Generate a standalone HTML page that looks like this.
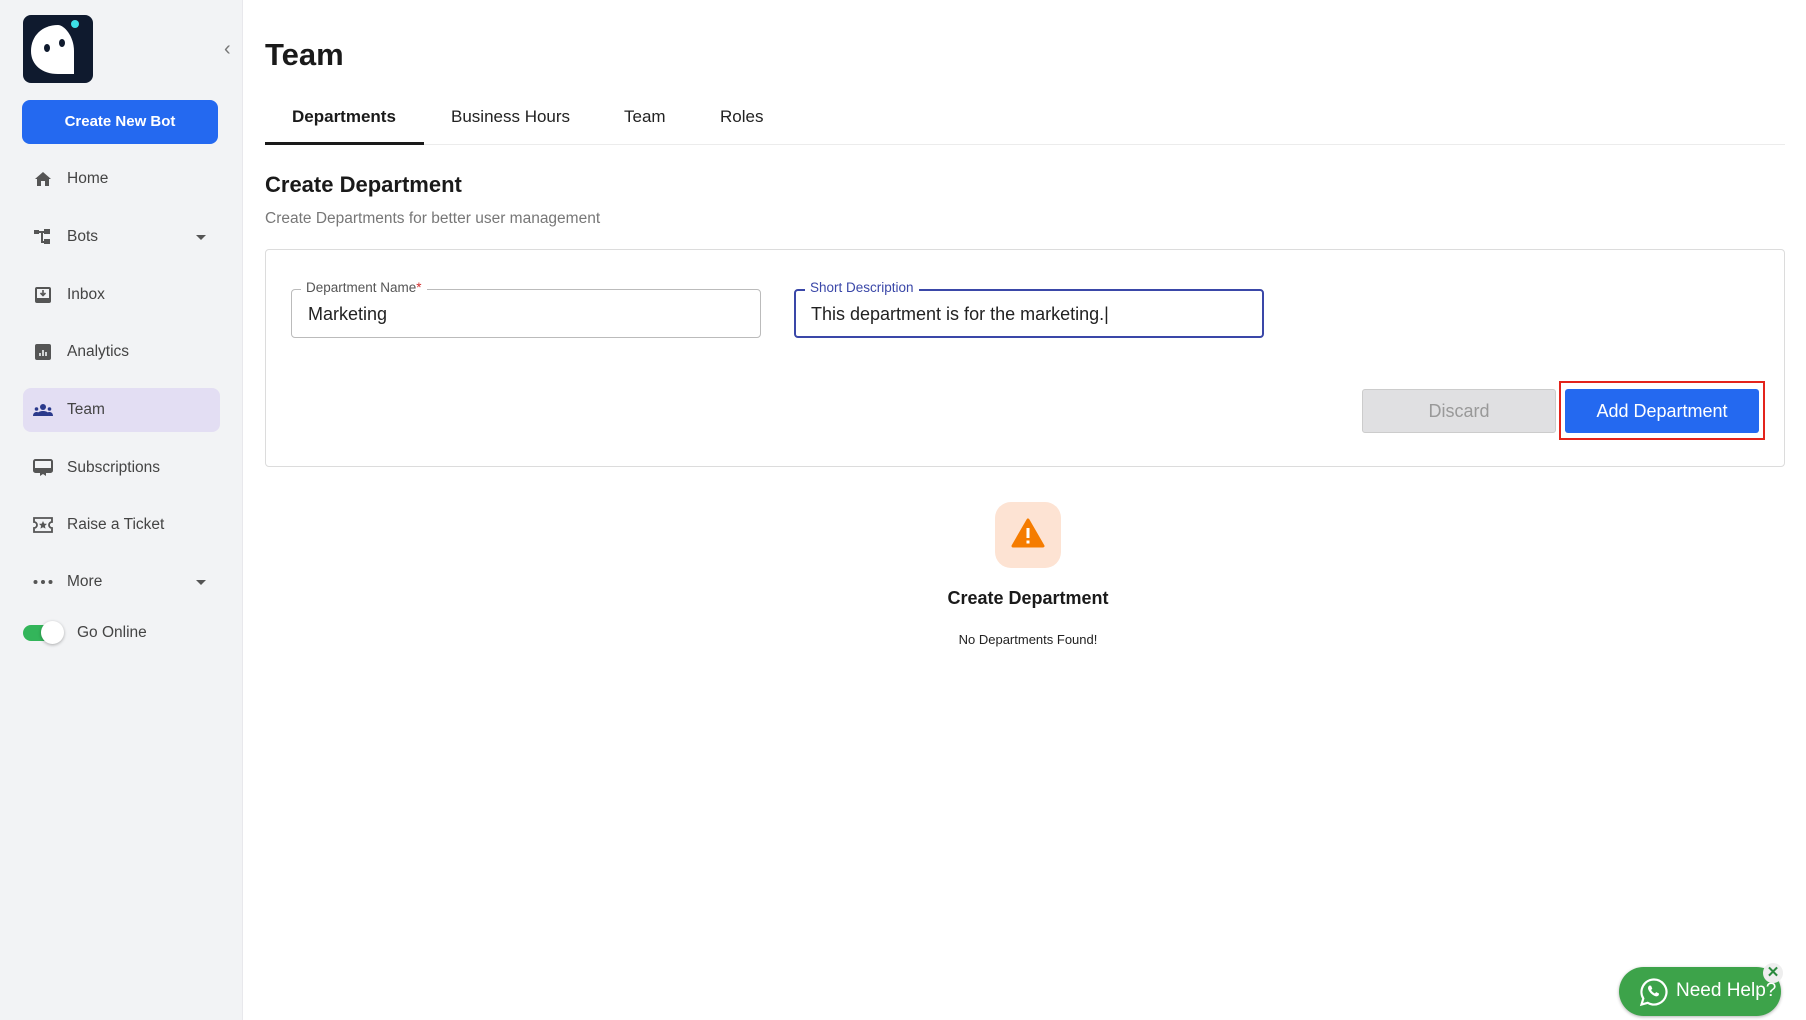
<!DOCTYPE html>
<html><head><meta charset="utf-8"><style>
*{box-sizing:border-box;margin:0;padding:0}
body{width:1806px;height:1020px;position:relative;font-family:"Liberation Sans",sans-serif;background:#fff;overflow:hidden;color:#222}
.sb{position:absolute;left:0;top:0;width:243px;height:1020px;background:#f2f3f5;border-right:1px solid #e8e8ec}
.logo{position:absolute;left:23px;top:15px;width:70px;height:68px;background:#0f1a2e;border-radius:8px}
.cnb{position:absolute;left:22px;top:100px;width:196px;height:44px;background:#2469f0;border-radius:8px;color:#fff;font-weight:bold;font-size:15px;text-align:center;line-height:44px}
.it{position:absolute;left:23px;width:197px;height:44px;font-size:15.5px;color:#444;line-height:44px}
.it .ic{position:absolute;left:10px;top:13px;width:20px;height:18px}
.it span{position:absolute;left:44px}
.it.act{background:#e3def3;border-radius:8px}
.car{position:absolute;right:14px;top:20px;border-left:5px solid transparent;border-right:5px solid transparent;border-top:5px solid #555}
.abs{position:absolute}
</style></head><body>
<div class="sb">
 <div class="logo">
  <svg width="70" height="68" viewBox="0 0 70 68"><path d="M35 10c-16 0-27 11-27 26 0 14 11 23 27 23h16V36c0-15-10-26-16-26z" fill="#fff"/><ellipse cx="24" cy="33" rx="3" ry="4" fill="#0f1a2e"/><ellipse cx="39" cy="28" rx="3" ry="4" fill="#0f1a2e"/><circle cx="52" cy="9" r="4" fill="#3de0e6"/></svg>
 </div>
 <div class="abs" style="left:224px;top:38px;color:#777;font-size:20px">‹</div>
 <div class="cnb">Create New Bot</div>
 <div class="it" style="top:157px"><svg class="ic" viewBox="0 0 20 18"><path d="M10 2L2 9h2v7h4v-5h4v5h4V9h2z" fill="#555"/></svg><span>Home</span></div>
 <div class="it" style="top:215px"><svg class="ic" viewBox="0 0 20 18"><rect x="1" y="2" width="5" height="4" fill="#555"/><rect x="11" y="1" width="6" height="5" fill="#555"/><rect x="11" y="11" width="6" height="5" fill="#555"/><path d="M6 4h5M9 4v10h2" stroke="#555" stroke-width="2" fill="none"/></svg><span>Bots</span><div class="car"></div></div>
 <div class="it" style="top:273px"><svg class="ic" viewBox="0 0 20 18"><rect x="2" y="1" width="16" height="16" rx="2" fill="#555"/><rect x="4" y="3" width="12" height="9" fill="#f2f3f5"/><path d="M10 4v5M7.5 7l2.5 2.5 2.5-2.5" stroke="#555" stroke-width="1.6" fill="none"/></svg><span>Inbox</span></div>
 <div class="it" style="top:330px"><svg class="ic" viewBox="0 0 20 18"><rect x="2" y="1" width="16" height="16" rx="2" fill="#555"/><path d="M7 13v-3M10 13V7M13 13v-4" stroke="#f2f3f5" stroke-width="1.6"/></svg><span>Analytics</span></div>
 <div class="it act" style="top:388px"><svg class="ic" viewBox="0 0 20 18"><circle cx="10" cy="6" r="3" fill="#2b3a8c"/><path d="M4 15c0-4 3-5 6-5s6 1 6 5z" fill="#2b3a8c"/><circle cx="3.5" cy="8" r="1.8" fill="#2b3a8c"/><circle cx="16.5" cy="8" r="1.8" fill="#2b3a8c"/><path d="M0 15c0-3 2-4 3.5-4s2 .5 2 .5L4 15zM20 15c0-3-2-4-3.5-4s-2 .5-2 .5L16 15z" fill="#2b3a8c"/></svg><span>Team</span></div>
 <div class="it" style="top:446px"><svg class="ic" viewBox="0 0 20 18"><rect x="1" y="1" width="18" height="12" rx="1.5" fill="none" stroke="#555" stroke-width="2"/><rect x="1" y="9" width="18" height="4" fill="#555"/><path d="M7 13v4l3-2 3 2v-4" fill="#555"/></svg><span>Subscriptions</span></div>
 <div class="it" style="top:503px"><svg class="ic" viewBox="0 0 20 18"><path d="M1 2h18v4a3 3 0 0 0 0 6v4H1v-4a3 3 0 0 0 0-6z" fill="none" stroke="#555" stroke-width="1.8"/><path d="M10 5l1.2 2.6 2.8.3-2.1 1.9.6 2.8-2.5-1.4-2.5 1.4.6-2.8-2.1-1.9 2.8-.3z" fill="#555"/></svg><span>Raise a Ticket</span></div>
 <div class="it" style="top:560px"><svg class="ic" viewBox="0 0 20 18"><circle cx="2.5" cy="9" r="2" fill="#555"/><circle cx="10" cy="9" r="2" fill="#555"/><circle cx="17.5" cy="9" r="2" fill="#555"/></svg><span>More</span><div class="car"></div></div>
 <div class="abs" style="left:23px;top:625px;width:38px;height:16px;border-radius:8px;background:#33b55a"></div>
 <div class="abs" style="left:41px;top:621px;width:23px;height:23px;border-radius:50%;background:#fff;box-shadow:0 1px 3px rgba(0,0,0,.3)"></div>
 <div class="abs" style="left:77px;top:624px;font-size:15.5px;color:#444">Go Online</div>
</div>

<div class="abs" style="left:265px;top:37px;font-size:31px;font-weight:bold;color:#1a1a1a">Team</div>
<div class="abs" style="left:292px;top:107px;font-size:17px;font-weight:bold;color:#1a1a1a">Departments</div>
<div class="abs" style="left:451px;top:107px;font-size:17px;color:#222">Business Hours</div>
<div class="abs" style="left:624px;top:107px;font-size:17px;color:#222">Team</div>
<div class="abs" style="left:720px;top:107px;font-size:17px;color:#222">Roles</div>
<div class="abs" style="left:265px;top:144px;width:1520px;height:1px;background:#ececec"></div>
<div class="abs" style="left:265px;top:142px;width:159px;height:3px;background:#1a1a1a"></div>

<div class="abs" style="left:265px;top:172px;font-size:22px;font-weight:bold;color:#1a1a1a">Create Department</div>
<div class="abs" style="left:265px;top:210px;font-size:15.5px;color:#777">Create Departments for better user management</div>

<div class="abs" style="left:265px;top:249px;width:1520px;height:218px;border:1px solid #dcdcdc;border-radius:4px"></div>
<div class="abs" style="left:291px;top:289px;width:470px;height:49px;border:1px solid #bbb;border-radius:4px"></div>
<div class="abs" style="left:301px;top:280px;padding:0 5px;background:#fff;font-size:13.5px;color:#555">Department Name<span style="color:#d32f2f">*</span></div>
<div class="abs" style="left:308px;top:304px;font-size:18px;color:#222">Marketing</div>
<div class="abs" style="left:794px;top:289px;width:470px;height:49px;border:2px solid #3a47a8;border-radius:4px"></div>
<div class="abs" style="left:805px;top:280px;padding:0 5px;background:#fff;font-size:13.5px;color:#3a47a8">Short Description</div>
<div class="abs" style="left:811px;top:304px;font-size:18px;color:#222">This department is for the marketing.|</div>

<div class="abs" style="left:1362px;top:389px;width:194px;height:44px;background:#e0e0e2;border:1px solid #ccc;border-radius:3px;color:#999;font-size:18px;text-align:center;line-height:42px">Discard</div>
<div class="abs" style="left:1559px;top:381px;width:206px;height:59px;border:2.5px solid #e3241c"></div>
<div class="abs" style="left:1565px;top:389px;width:194px;height:44px;background:#2469f0;border-radius:3px;color:#fff;font-size:18px;text-align:center;line-height:44px">Add Department</div>

<div class="abs" style="left:995px;top:502px;width:66px;height:66px;border-radius:16px;background:#fde3d3">
 <svg width="66" height="66" viewBox="0 0 66 66"><path d="M33 18L48 44H18z" fill="#f57c00" stroke="#f57c00" stroke-width="3" stroke-linejoin="round"/><rect x="31.5" y="26" width="3" height="10" fill="#fff"/><rect x="31.5" y="38.5" width="3" height="3" fill="#fff"/></svg>
</div>
<div class="abs" style="left:828px;top:588px;width:400px;text-align:center;font-size:18px;font-weight:bold;color:#1a1a1a">Create Department</div>
<div class="abs" style="left:828px;top:632px;width:400px;text-align:center;font-size:13px;color:#222">No Departments Found!</div>

<div class="abs" style="left:1619px;top:967px;width:162px;height:49px;border-radius:25px;background:#3da34a;box-shadow:0 1px 3px rgba(0,0,0,.3)">
 <svg class="abs" style="left:20px;top:10px" width="30" height="30" viewBox="0 0 30 30"><path d="M15 2.5A12.5 12.5 0 0 0 4.3 21.5L2.5 27.5l6.2-1.7A12.5 12.5 0 1 0 15 2.5z" fill="none" stroke="#fff" stroke-width="2.2"/><path d="M10.5 8.5c-1 .5-2 2-1.2 4 1 2.5 3.5 5.2 6.5 6.5 2 .8 3.5 0 4-1l.2-1.5-2.8-1.4-1.3 1.4c-1.5-.6-3-2-3.8-3.5l1.2-1.4-1.2-2.9z" fill="#fff"/></svg>
 <div class="abs" style="left:57px;top:13px;color:#fff;font-size:19px">Need Help?</div>
</div>
<div class="abs" style="left:1763px;top:963px;width:20px;height:20px;border-radius:50%;background:#eee;color:#2b8a3e;font-size:15px;font-weight:bold;text-align:center;line-height:20px">✕</div>
</body></html>
